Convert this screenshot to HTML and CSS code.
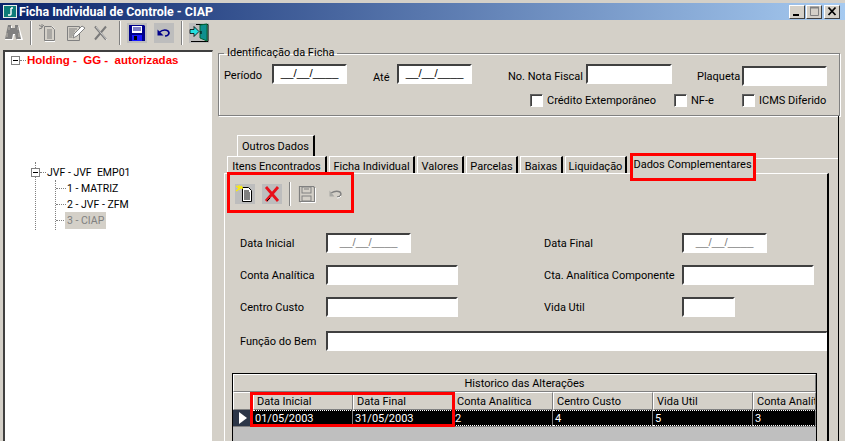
FILE: index.html
```html
<!DOCTYPE html>
<html lang="pt">
<head>
<meta charset="utf-8">
<title>Ficha Individual de Controle - CIAP</title>
<link rel="stylesheet" href="styles.css">
</head>
<body>
<div class="window">
  <header class="titlebar">
    <svg class="app-icon" width="14" height="13" viewBox="0 0 14 13"><rect width="14" height="13" fill="#e8efe8"/><rect x="1" y="1" width="12" height="11" fill="#0e7c78"/><path d="M8 3h2M8 3v6q0 1-1 1H5" stroke="#fff" stroke-width="1.4" fill="none"/></svg>
    <span class="title-text">Ficha Individual de Controle - CIAP</span>
    <div class="win-buttons">
      <button class="win-btn"><svg width="16" height="13" viewBox="0 0 16 13"><rect x="4" y="9" width="6" height="2" fill="#000"/></svg></button>
      <button class="win-btn"><svg width="14" height="13" viewBox="0 0 14 13"><path d="M3.5 2.5h8v8h-8z" fill="none" stroke="#808080"/><path d="M3 2.5h9" stroke="#808080" stroke-width="2"/></svg></button>
      <button class="win-btn win-close"><svg width="16" height="13" viewBox="0 0 16 13"><path d="M4.5 2.5l7 7.5M11.5 2.5l-7 7.5" stroke="#000" stroke-width="1.8"/></svg></button>
    </div>
  </header>
  <nav class="toolbar">
    <span class="tool"><svg width="20" height="20" viewBox="0 0 20 20"><path d="M5 3h3v3h4V3h3l4 14h-6l-1-5h-2l-1 5H1z" fill="#fff"/><path d="M4 2h3v3h4V2h3l3 14h-5l-1-5H9l-1 5H1z" fill="#808080"/><path d="M5 4v3M14 4v3M3 10v4M15 10v4" stroke="#b8b4ac"/></svg></span>
    <span class="sep"></span>
    <span class="tool"><svg width="20" height="20" viewBox="0 0 20 20"><path d="M7 3h7l3 3v13H7z" fill="#fff"/><path d="M6.500 3.500h7l3 3v11h-10z" fill="#d4d0c8" stroke="#808080"/><path d="M9 7h5M9 9h5M9 11h5M9 13h5M9 15h5" stroke="#808080"/><path d="M1 2l3 2M4 1v4M1 6l3-1M6 2L4 4" stroke="#808080"/></svg></span>
    <span class="tool ml1"><svg width="20" height="20" viewBox="0 0 20 20"><path d="M2.500 3.500h12v14h-12z" fill="#d4d0c8" stroke="#808080"/><path d="M4 6h8M4 8h6M4 10h5M4 12h4M4 14h3" stroke="#808080"/><path d="M8 15l1-4 8-8 3 2-8 8z" fill="#fff" stroke="#808080"/></svg></span>
    <span class="tool"><svg width="20" height="20" viewBox="0 0 20 20"><path d="M4 3.500l11 13M15 3.500l-11 13" stroke="#7a7a7a" stroke-width="2"/><path d="M5 4l11 13" stroke="#fff" stroke-width=".6"/></svg></span>
    <span class="sep ml2"></span>
    <span class="tool active"><svg width="20" height="20" viewBox="0 0 20 20"><path d="M2 2h15l1 1v15H2z" fill="#00008a"/><rect x="5" y="3" width="10" height="7" fill="#fff"/><path d="M6 5h8M6 7h8" stroke="#00008a"/><rect x="5" y="12" width="10" height="6" fill="#1a1aff"/><rect x="7" y="13" width="3" height="4" fill="#000"/></svg></span>
    <span class="tool active ml1"><svg width="20" height="20" viewBox="0 0 20 20"><path d="M5 9.500q5-4 9-1.500 2 2 0 4-1 1-3 1" fill="none" stroke="#00008a" stroke-width="1.600"/><path d="M3.500 6.500v6h6z" fill="#00008a"/></svg></span>
    <span class="sep ml1"></span>
    <span class="tool active"><svg width="20" height="20" viewBox="0 0 20 20"><path d="M7 1.500h12v17H2" fill="none" stroke="#000"/><path d="M11 2l7-1v17l-7-3z" fill="#0f8f8f" stroke="#063"/><path d="M12 8v3" stroke="#000"/><path d="M1 6.500h4v-3l5 5-5 5v-3H1z" fill="#22e0e0" stroke="#000" stroke-width=".8"/></svg></span>
  </nav>
  <div class="main">
    <aside class="tree">
      <div class="node root-node"><span class="toggle"></span><span class="twig"></span><span class="root-label">Holding -&nbsp; GG -&nbsp; autorizadas</span></div>
      <div class="branch">
        <div class="node"><span class="toggle toggle-in"></span><span class="twig"></span><span class="node-label">JVF - JVF&nbsp; EMP01</span></div>
        <div class="branch sub-branch">
          <div class="node"><span class="leaf"></span><span class="node-label">1 - MATRIZ</span></div>
          <div class="node"><span class="leaf"></span><span class="node-label">2 - JVF - ZFM</span></div>
          <div class="node"><span class="leaf"></span><span class="node-label selected">3 - CIAP</span></div>
        </div>
      </div>
    </aside>
    <section class="content">
      <fieldset class="group">
        <legend class="group-title">Identificação da Ficha</legend>
        <div class="id-row">
          <label class="lb l-per">Período</label><div class="input i-date mask">__/__/____</div>
          <label class="lb l-ate">Até</label><div class="input i-date mask">__/__/____</div>
          <label class="lb l-nf">No. Nota Fiscal</label><div class="input i-nf"></div>
          <label class="lb l-pl">Plaqueta</label><div class="input i-pl"></div>
        </div>
        <div class="check-row">
          <div class="check c-1"><span class="box"></span><span>Crédito Extemporâneo</span></div>
          <div class="check c-2"><span class="box"></span><span>NF-e</span></div>
          <div class="check"><span class="box"></span><span>ICMS Diferido</span></div>
        </div>
      </fieldset>
      <div class="book">
        <div class="tab-top"><span class="tab">Outros Dados</span></div>
        <div class="tab-row">
          <span class="tab t-itens">Itens Encontrados</span>
          <span class="tab t-ficha">Ficha Individual</span>
          <span class="tab t-valores">Valores</span>
          <span class="tab t-parcelas">Parcelas</span>
          <span class="tab t-baixas">Baixas</span>
          <span class="tab t-liq">Liquidação</span>
          <span class="tab tab-on">Dados Complementares</span>
          <span class="tab-fill"></span>
        </div>
        <div class="pane">
          <div class="pane-tools">
            <span class="tool active"><svg width="20" height="20" viewBox="0 0 20 20"><path d="M7.500 3.500h6l3 3v11h-9z" fill="#fff" stroke="#000"/><path d="M9 7h5M9 9h6M9 11h6M9 13h6M9 15h6" stroke="#000"/><path d="M1 2l3 2M4 1v5M1 7l3-2M7 2L4 4M4 4h4" stroke="#ffee00" stroke-width="1.300"/></svg></span>
            <span class="tool active"><svg width="20" height="20" viewBox="0 0 20 20"><path d="M4 3l12 14M16 3L4 17" stroke="#e8101a" stroke-width="2.800"/><path d="M5 17l3-3" stroke="#000"/></svg></span>
            <span class="sep"></span>
            <span class="tool"><svg width="20" height="20" viewBox="0 0 20 20"><path d="M1.500 2.500h14l1 1v14h-15z" fill="none" stroke="#808080" stroke-width="1.200"/><path d="M17.500 4v14.500H3" fill="none" stroke="#fff"/><rect x="4" y="3" width="9" height="6" fill="none" stroke="#808080"/><path d="M6 5h5" stroke="#808080"/><rect x="4" y="12" width="9" height="5" fill="none" stroke="#808080"/></svg></span>
            <span class="tool ml1"><svg width="20" height="20" viewBox="0 0 20 20"><path d="M5 9q5-3 9-1 2 2 0 4-1 1-3 1" fill="none" stroke="#808080" stroke-width="1.400"/><path d="M11 14q3 0 4-2" fill="none" stroke="#fff"/><path d="M3.500 6.500v6h5z" fill="#a8a8a4"/></svg></span>
          </div>
          <div class="form">
            <div class="frow"><div class="cell"><label class="flb">Data Inicial</label><div class="input f-date mask muted">__/__/____</div></div><div class="cell"><label class="flb flb-r">Data Final</label><div class="input f-date mask muted">__/__/____</div></div></div>
            <div class="frow"><div class="cell"><label class="flb">Conta Analítica</label><div class="input f-acc"></div></div><div class="cell"><label class="flb flb-r">Cta. Analítica Componente</label><div class="input f-acc"></div></div></div>
            <div class="frow"><div class="cell"><label class="flb">Centro Custo</label><div class="input f-acc"></div></div><div class="cell"><label class="flb flb-r">Vida Util</label><div class="input f-life"></div></div></div>
            <div class="frow frow-last"><div class="cell"><label class="flb">Função do Bem</label><div class="input f-func"></div></div></div>
          </div>
          <div class="dbgrid">
            <div class="grid-title">Historico das Alterações</div>
            <div class="grid-cols">
              <div class="gh gh-ind"></div>
              <div class="gh">Data Inicial</div>
              <div class="gh">Data Final</div>
              <div class="gh">Conta Analítica</div>
              <div class="gh">Centro Custo</div>
              <div class="gh">Vida Util</div>
              <div class="gh">Conta Analítica</div>
            </div>
            <div class="grid-cols grid-row">
              <div class="gc gc-ind"><svg width="10" height="12" viewBox="0 0 10 12"><path d="M1 0l8 6-8 6z" fill="#fff"/></svg></div>
              <div class="gc">01/05/2003</div>
              <div class="gc">31/05/2003</div>
              <div class="gc">2</div>
              <div class="gc">4</div>
              <div class="gc">5</div>
              <div class="gc">3</div>
            </div>
            <div class="grid-empty"></div>
          </div>
        </div>
        <div class="mark mark-tab"></div>
        <div class="mark mark-tools"></div>
        <div class="mark mark-grid"></div>
      </div>
    </section>
  </div>
</div>
</body>
</html>
```
FILE: styles.css
```css
* { box-sizing: border-box; }
html, body { margin: 0; padding: 0; }
body { background: #d4d0c8; font: 11px/14px Roboto, "Liberation Sans", Arial, sans-serif; color: #000; overflow: hidden; }
.window { width: 845px; height: 441px; display: flex; flex-direction: column; overflow: hidden; }

.titlebar { flex: none; height: 20px; border-top: 3px solid #d4d0c8; display: flex; align-items: center; padding: 0 5px 0 3px; background: linear-gradient(90deg, #0a246a, #a6caf0); background-clip: padding-box; color: #fff; }
.app-icon { flex: none; margin-right: 2px; }
.title-text { font: bold 12.4px/16px Roboto, "Liberation Sans", Arial, sans-serif; }
.win-buttons { margin-left: auto; display: flex; gap: 1px; }
.win-btn { width: 16px; height: 14px; padding: 0; margin: 0; background: #d4d0c8; border: 1px solid; border-color: #fff #404040 #404040 #fff; display: flex; align-items: center; justify-content: center; overflow: hidden; }
.win-close { margin-left: 1px; }
.win-btn svg { flex: none; }

.toolbar { flex: none; height: 26px; display: flex; align-items: center; gap: 6px; padding-left: 4px; }
.tool { width: 20px; height: 20px; flex: none; display: block; }
.tool svg { display: block; }
.active { background: #bdbdbd; }
.sep { width: 2px; height: 24px; flex: none; background: linear-gradient(90deg, #808080 50%, #fff 50%); }
.ml1 { margin-left: 1px; }
.ml2 { margin-left: 2px; }

.main { flex: 1; min-height: 0; display: flex; gap: 5px; padding-left: 3px; }

.tree { width: 210px; margin-top: 4px; background: #fff; border-top: 2px solid #404040; border-left: 2px solid #404040; border-right: 1px solid #d4d0c8; position: relative; }
.node { height: 16px; display: flex; align-items: center; white-space: nowrap; font-size: 10.5px; }
.root-node { margin: 0 0 94px 6px; }
.toggle { width: 9px; height: 9px; flex: none; border: 1px solid #808080; background: linear-gradient(#000, #000) center / 5px 1px no-repeat #fff; }
.toggle-in { margin-left: -5px; }
.twig { width: 6px; flex: none; margin: 0 1px 0 0; border-top: 1px dotted #808080; }
.root-label { color: #f00; font: bold 11.5px/14px "Liberation Sans", Arial, sans-serif; }
.node-label { line-height: 16px; padding-top: 1px; }
.leaf { width: 10px; flex: none; margin-right: 1px; border-top: 1px dotted #808080; }
.selected { background: #d4d0c8; color: #808080; padding: 1px 2px 0; margin-left: -2px; }
.branch { margin-left: 30px; border-left: 1px dotted #808080; padding-top: 2px; height: 68px; }
.sub-branch { margin-left: 19px; padding-top: 0; height: 50px; margin-top: 0; }

.content { width: 622px; flex: none; display: flex; flex-direction: column; min-height: 0; }
.group { flex: none; height: 70px; margin: 0; padding: 0; border: 1px solid #808080; box-shadow: 1px 1px 0 #fff, inset 1px 1px 0 #fff; min-width: 0; }
.group-title { margin-left: 5px; padding: 0 3px; height: 14px; line-height: 14px; }
.id-row { display: flex; height: 22px; margin-top: 4px; padding-left: 5px; }
.lb { line-height: 24px; white-space: nowrap; }
.l-per { width: 48px; }
.l-ate { width: 24px; margin-left: 26px; line-height: 28px; }
.l-nf { width: 78px; margin-left: 36px; line-height: 26px; }
.l-pl { width: 45px; margin-left: 25px; line-height: 26px; }

.input { height: 20px; flex: none; background: #fff; border: 2px solid; border-color: #404040 #fff #fff #404040; }
.mask { font: 11.5px/15px "Liberation Sans", Arial, sans-serif; text-align: center; }
.muted { color: #808080; }
.i-date { width: 75px; }
.i-nf { width: 86px; }
.i-pl { width: 85px; margin-top: 2px; }

.check-row { display: flex; margin-top: 8px; padding-left: 311px; }
.check { display: flex; align-items: center; gap: 4px; height: 13px; white-space: nowrap; }
.c-1 { width: 144px; }
.c-2 { width: 68px; }
.box { width: 13px; height: 13px; flex: none; background: #fff; border: 1px solid; border-color: #606060 #fff #fff #606060; box-shadow: inset 1px 1px 0 #404040; }

.book { flex: 1; min-height: 0; width: 621px; margin-top: 0; border-right: 1px solid #000; position: relative; display: flex; flex-direction: column; }
.tab-top { flex: none; margin-top: 19px; padding-left: 19px; height: 21px; display: flex; }
.tab-top .tab { width: 78px; height: 21px; line-height: 21px; }
.tab { flex: none; display: block; height: 17px; line-height: 19px; text-align: center; white-space: nowrap; border-top: 1px solid #fff; border-left: 1px solid #fff; border-right: 2px solid #000; }
.tab-row { flex: none; height: 17px; display: flex; gap: 2px; padding-left: 9px; position: relative; z-index: 1; }
.t-itens { width: 100px; }
.t-ficha { width: 86px; }
.t-valores { width: 47px; }
.t-parcelas { width: 52px; }
.t-baixas { width: 43px; }
.t-liq { width: 62px; }
.tab-on { width: 126px; height: 22px; margin: -3px 0 0 1px; line-height: 22px; background: #d4d0c8; }
.tab-fill { flex: 1; height: 1px; margin: 2px 0 0 -2px; background: #fff; }

.pane { flex: 1; min-height: 0; margin-left: 6px; width: 605px; border-top: 1px solid #fff; border-left: 1px solid #fff; border-right: 2px solid #000; overflow: hidden; }
.pane-tools { display: flex; align-items: center; gap: 7px; height: 20px; margin-top: 10px; padding-left: 10px; }

.form { margin-top: 29px; padding-left: 15px; }
.frow { display: flex; height: 20px; margin-bottom: 12px; }
.frow-last { margin-top: 14px; margin-bottom: 0; }
.cell { display: flex; width: 304px; flex: none; }
.flb { width: 86px; flex: none; line-height: 21px; white-space: nowrap; }
.flb-r { width: 138px; }
.f-date { width: 85px; }
.f-acc { width: 132px; }
.f-life { width: 53px; }
.f-func { width: 502px; }

.dbgrid { margin: 22px 0 0 7px; width: 585px; height: 68px; background: #bfbfbf; border: 1px solid #000; border-bottom: 0; overflow: hidden; }
.grid-title { height: 18px; line-height: 17px; text-align: center; border: 1px solid; border-color: #fff #808080 #808080 #fff; background: #d4d0c8; }
.grid-cols { display: grid; grid-template-columns: 20px 100px 100px 100px 100px 100px 1fr; }
.gh { height: 18px; line-height: 17px; padding-left: 3px; white-space: nowrap; overflow: hidden; background: #d4d0c8; border: 1px solid; border-color: #fff #808080 #808080 #fff; }
.grid-row { background: #000; height: 16px; }
.gc { height: 16px; line-height: 15px; padding-left: 2px; color: #fff; border-top: 1px dotted #fff; border-bottom: 1px dotted #fff; border-right: 1px solid #808080; }
.gc-ind { background: #2b3648; border: 0; border-right: 1px solid #808080; padding: 2px 0 0 5px; }
.gc-ind svg { display: block; }
.grid-empty { height: 20px; border-top: 1px solid #808080; }

.mark { position: absolute; border: 3px solid #f00; z-index: 2; pointer-events: none; }
.mark-tab { left: 412px; top: 37px; width: 126px; height: 28px; }
.mark-tools { left: 9px; top: 56px; width: 127px; height: 41px; }
.mark-grid { left: 32px; top: 276px; width: 205px; height: 35px; }
```
